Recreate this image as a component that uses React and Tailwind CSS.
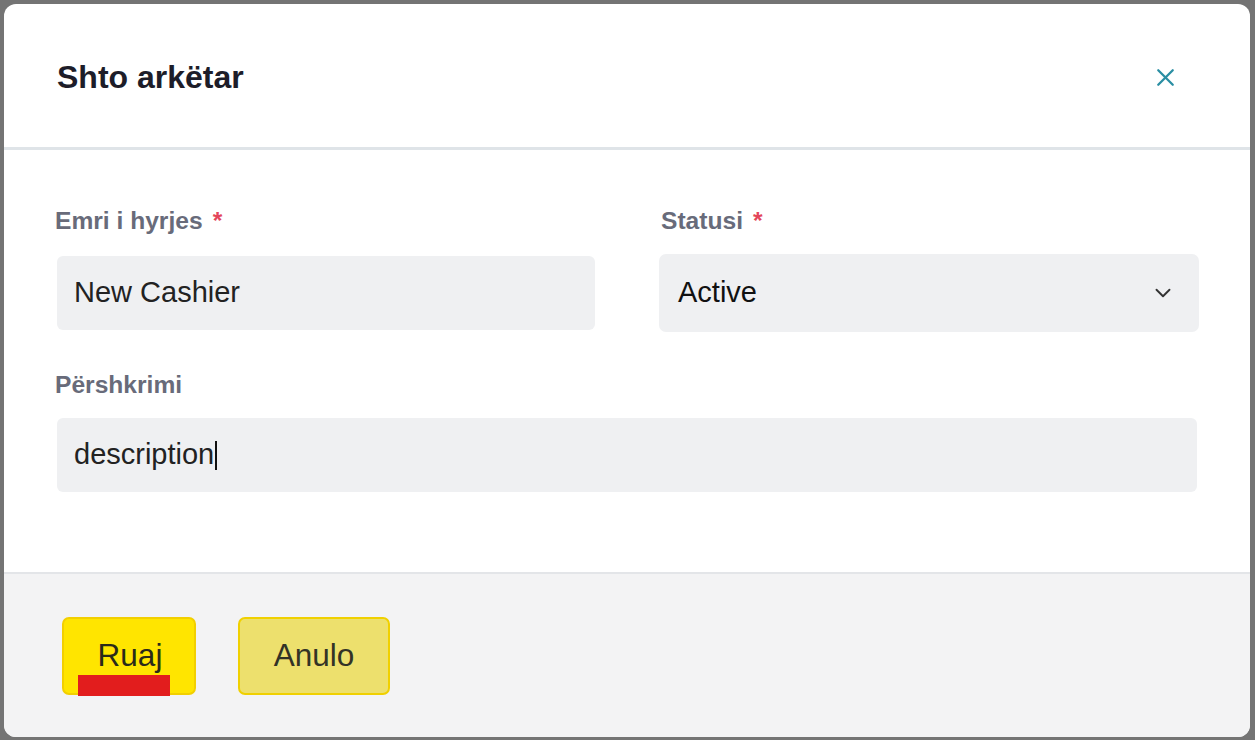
import { X, ChevronDown } from "lucide-react";

function Label({ children, required, className = "-ml-[2px]" }) {
  return (
    <label className={"block text-[24.6px] leading-[28px] font-bold text-[#686b7a] " + className}>
      {children}
      {required && <span className="ml-[10px] text-[#e3465a]">*</span>}
    </label>
  );
}

export default function App() {
  return (
    <div
      className="w-[1255px] h-[740px] bg-[#747474] pt-[4px] pl-[4px] pr-[5px] pb-[3px]"
      style={{ fontFamily: '"Liberation Sans", Arial, sans-serif' }}
    >
      <div className="h-full flex flex-col bg-white rounded-[12px] overflow-hidden">
        {/* header */}
        <div className="h-[146px] shrink-0 flex items-center justify-between pl-[53px] pr-[70px] border-b-[3px] border-[#dfe4e8]">
          <h2 className="text-[32px] font-bold text-[#1d1d29] mt-[3px]">Shto arkëtar</h2>
          <button className="text-[#2a8ea3] mt-[3px]">
            <X size={29} strokeWidth={1.9} />
          </button>
        </div>

        {/* body */}
        <div className="h-[422px] shrink-0 pt-[57px] pl-[53px] pr-[53px]">
          <div className="grid grid-cols-2 gap-x-[64px]">
            <div>
              <Label required>Emri i hyrjes</Label>
              <div className="mt-[21px] h-[74px] rounded-[6px] bg-[#eff0f2] flex items-center px-[17px] text-[29px] text-[#222]">
                New Cashier
              </div>
            </div>
            <div>
              <Label required className="ml-[2px]">Statusi</Label>
              <div className="mt-[19px] -mr-[2px] h-[78px] rounded-[7px] bg-[#eff0f2] flex items-center justify-between pl-[19px] pr-[23px] text-[29px] text-[#111]">
                <span>Active</span>
                <ChevronDown size={26} strokeWidth={1.75} className="text-[#333]" />
              </div>
            </div>
          </div>
          <div className="mt-[39px]">
            <Label>Përshkrimi</Label>
            <div className="mt-[19px] h-[74px] rounded-[6px] bg-[#eff0f2] flex items-center px-[17px] text-[29px] text-[#222]">
              <span>description</span>
              <span className="w-[2px] h-[29px] bg-[#111] ml-[1px]" />
            </div>
          </div>
        </div>

        {/* footer */}
        <div className="flex-1 bg-[#f3f3f4] border-t-[2px] border-[#e3e5e8] flex items-center gap-[42px] pl-[58px]">
          <button className="relative w-[134px] h-[78px] rounded-[7px] bg-[#ffe500] border-2 border-[#f2cf00] text-[31.5px] text-[#2a2a1a]">
            <span className="relative left-[1px]">Ruaj</span>
            <span className="absolute left-[14px] -bottom-[3px] w-[92px] h-[21px] bg-[#e21d1d]" />
          </button>
          <button className="w-[152px] h-[78px] rounded-[7px] bg-[#ede06d] border-2 border-[#f0d000] text-[31.5px] text-[#333326]">
            <span className="relative">Anulo</span>
          </button>
        </div>
      </div>
    </div>
  );
}
